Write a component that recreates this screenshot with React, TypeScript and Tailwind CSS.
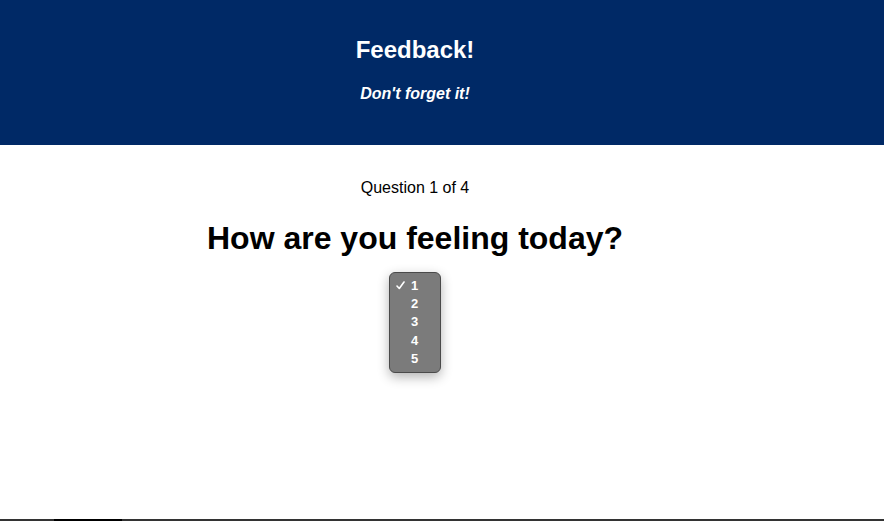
import React from "react";

const options = [1, 2, 3, 4, 5];

export default function App() {
  return (
    <div className="flex h-[521px] flex-col bg-white font-['Liberation_Sans',Arial,sans-serif] text-black">
      <header className="h-[145px] bg-[#002966] text-white">
        <div className="flex w-[830px] flex-col items-center pt-[36px]">
          <h1 className="text-[24px] font-bold leading-[28px]">Feedback!</h1>
          <p className="mt-[20px] text-[16px] font-bold italic leading-[20px]">Don't forget it!</p>
        </div>
      </header>

      <main className="flex w-[830px] flex-1 flex-col items-center pt-[33px]">
        <p className="text-[16px] leading-[20px]">Question 1 of 4</p>
        <h2 className="mt-[20px] text-[32px] font-bold leading-[40px]">How are you feeling today?</h2>
        <div className="mt-[14px] flex h-[101px] w-[52px] flex-col rounded-[6px] border border-[#4a4a4a] bg-[#7b7b7b] pt-[3px] shadow-[0_4px_12px_rgba(0,0,0,0.3)]">
          {options.map((n) => (
            <div key={n} className="flex h-[18.4px] items-center text-[13px] font-bold leading-none text-white">
              <span className="flex w-[21px] justify-start pl-[6px]">
                {n === 1 && (
                  <svg width="9" height="9" viewBox="0 0 9 9" fill="none">
                    <path d="M1 5 L3.3 7.5 L8 1" stroke="white" strokeWidth="1.6" strokeLinecap="round" strokeLinejoin="round" />
                  </svg>
                )}
              </span>
              <span>{n}</span>
            </div>
          ))}
        </div>
      </main>

      <div className="flex h-[2px] bg-[#333333]">
        <div className="ml-[54px] w-[68px] bg-black" />
      </div>
    </div>
  );
}
